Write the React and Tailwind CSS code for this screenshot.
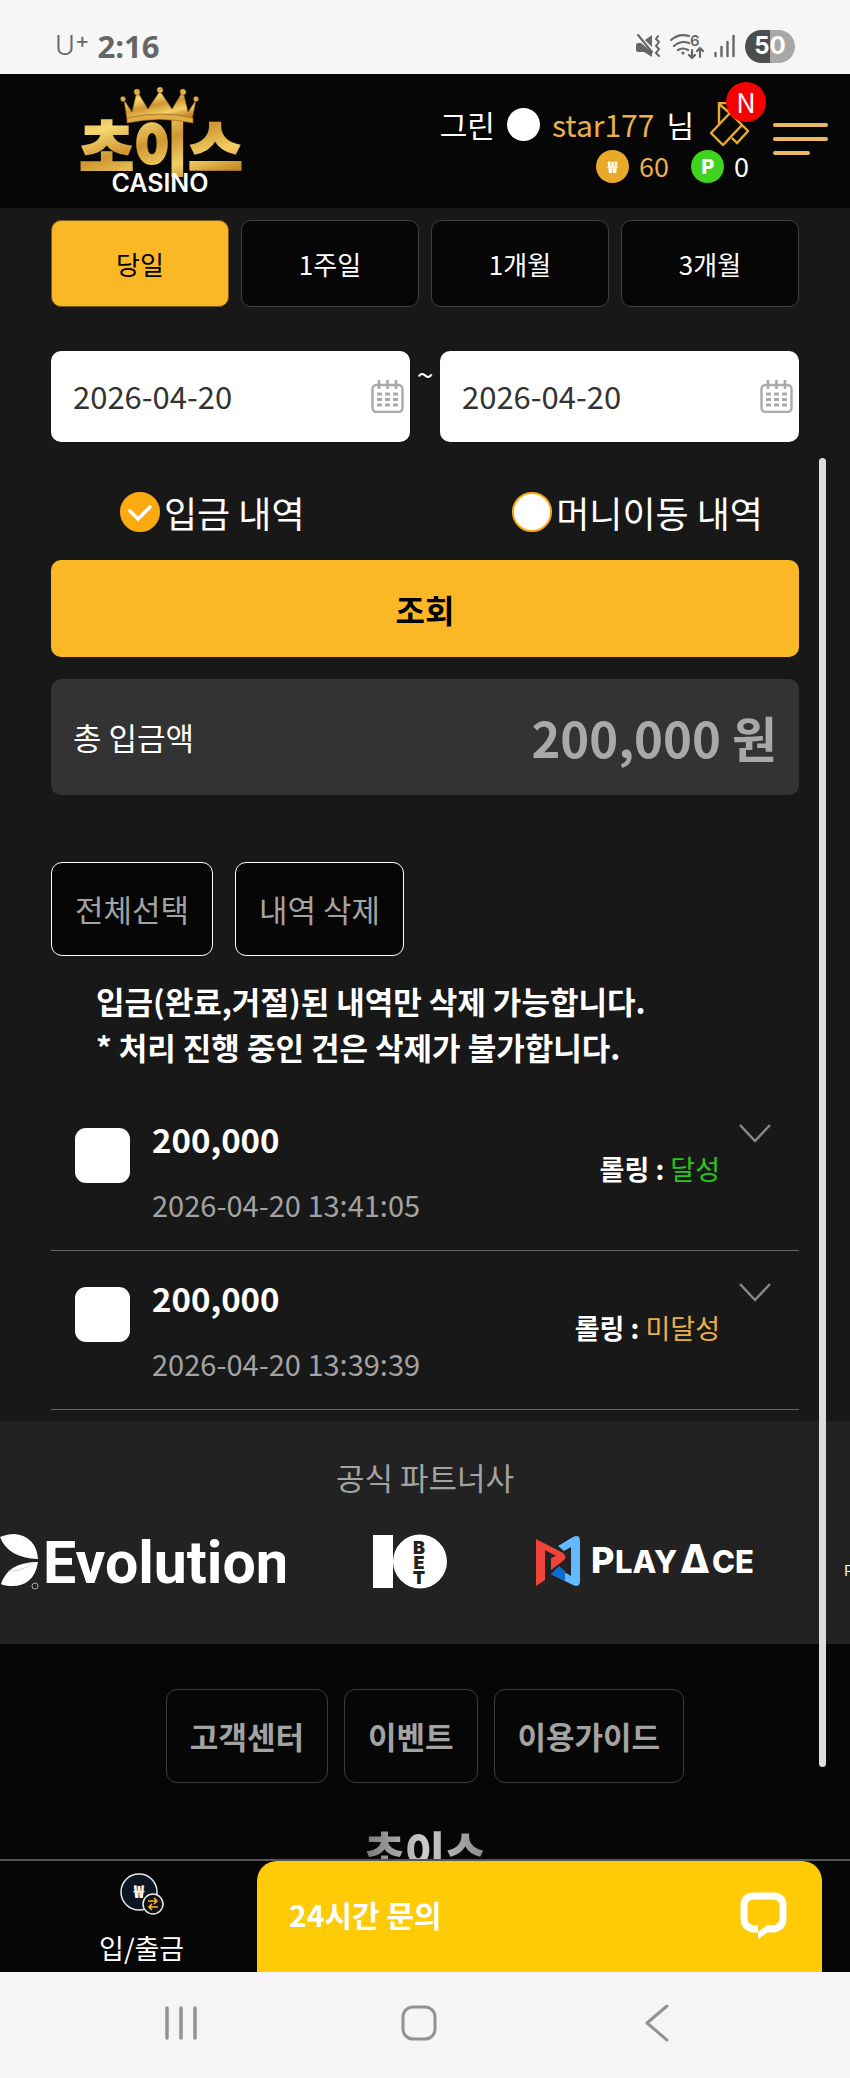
import { useState } from "react";

const periods = ["당일", "1주일", "1개월", "3개월"];

const historyTypes = [
  { id: "deposit", label: "입금 내역" },
  { id: "transfer", label: "머니이동 내역" },
];

const deposits = [
  { id: 1, amount: "200,000", date: "2026-04-20 13:41:05", rolling: "달성", done: true },
  { id: 2, amount: "200,000", date: "2026-04-20 13:39:39", rolling: "미달성", done: false },
];

const footerLinks = ["고객센터", "이벤트", "이용가이드"];

const StatusBar = () => (
  <div className="flex h-[74px] items-center justify-between bg-[#f6f6f6] px-[55px] pt-[18px] text-[#666]">
    <div className="flex items-center gap-2 font-['Open_Sans',sans-serif]">
      <span className="flex items-start font-[Inter,sans-serif] text-[27px] leading-8 font-light">
        U<span className="text-[22px] leading-5 font-normal">+</span>
      </span>
      <span className="text-[31px] leading-8 font-bold">2:16</span>
    </div>
    <div className="flex items-center gap-[10px]">
      {/* muted + vibrate */}
      <svg width="24" height="24" viewBox="0 0 24 24" fill="#666">
        <path d="M0 11q0-2 2-2h3l11 9v5l-8-5H2q-2 0-2-2zM9 6l7-5v12z" />
        <path d="M2 1l14 17" stroke="#666" strokeWidth="2" strokeLinecap="round" />
        <path
          d="M22 2l-2 3 3 3-3 4 3 3-3 4 3 3"
          fill="none"
          stroke="#666"
          strokeWidth="2"
          strokeLinecap="round"
        />
      </svg>
      {/* wifi 6 */}
      <svg width="34" height="26" viewBox="0 0 34 26" fill="none" stroke="#666" strokeWidth="2.2" strokeLinecap="round">
        <path d="M1 7Q9 0 19 3M4 13q7-6 15-3M8 17q5-3 10 0" />
        <circle cx="13" cy="20" r="1.600" fill="#666" stroke="none" />
        <path d="M22 17v8m-3-3 3 3 3-3M30 24v-9m-3 3 3-3 3 3" />
        <text x="20" y="13" fontSize="15" fontWeight="600" fontFamily="Inter" fill="#666" stroke="none">
          6
        </text>
      </svg>
      <svg width="21" height="24" viewBox="0 0 21 24" stroke="#666" strokeWidth="2.4" strokeLinecap="round">
        <path d="M1.500 19v3M7.500 13v9M13.500 8v14M19.500 2v20" />
      </svg>
      <span className="flex h-[33px] w-[50px] items-center justify-center rounded-full bg-linear-to-r from-[#4d4d4d] from-50% to-[#a8a8a8] to-50% font-[Inter,sans-serif] text-[24px] font-bold text-white">
        50
      </span>
    </div>
  </div>
);

const Logo = () => (
  <svg width="166" height="108" viewBox="0 0 166 108" role="img" aria-label="초이스 CASINO">
    <defs>
      <linearGradient id="gold" x1="0" y1="0" x2="0.6" y2="1">
        <stop offset="0" stopColor="#d79a35" />
        <stop offset="0.3" stopColor="#f6d873" />
        <stop offset="0.55" stopColor="#cf9630" />
        <stop offset="0.8" stopColor="#f3cf66" />
        <stop offset="1" stopColor="#c58a2a" />
      </linearGradient>
    </defs>
    <text
      x="81"
      y="85"
      textAnchor="middle"
      fontFamily="'Noto Sans CJK KR'"
      fontWeight="900"
      fontSize="59"
      fill="url(#gold)"
      stroke="url(#gold)"
      strokeWidth="2"
    >
      초이스
    </text>
    <g fill="url(#gold)" stroke="#8a5413" strokeWidth="0.6">
      <path d="M47 35L44 15l8 12 5-21 11 18L80 6l12 18 11-18 5 21 8-12-4 20q-32-8-65 0z" />
      <path d="M47 33q33-8 66 0v5q-33-7-66 0z" fill="#e3ad45" />
      <circle cx="43" cy="14" r="2.5" />
      <circle cx="57" cy="7" r="3" />
      <circle cx="80" cy="5" r="3" />
      <circle cx="103" cy="7" r="3" />
      <circle cx="116" cy="14" r="2.5" />
    </g>
    <text x="80" y="107" textAnchor="middle" fontFamily="Inter" fontWeight="600" fontSize="25" fill="#fff">
      CASINO
    </text>
  </svg>
);

const Header = () => (
  <header className="flex h-[134px] items-start justify-between bg-[#060606] pr-[22px] pl-20 text-white">
    <a href="#home" className="pt-[11px]">
      <Logo />
    </a>
    <div className="flex gap-6 pt-[29px]">
      <div className="flex flex-col items-end gap-1">
        <div className="flex h-[42px] items-center text-[30px]">
          <span>그린</span>
          <span className="mx-3 h-[33px] w-[33px] rounded-full bg-white" />
          <span className="text-[#eab04a]">star177</span>
          <span className="mr-4 ml-3">님</span>
          <a href="#messages" aria-label="쪽지" className="relative">
            <svg width="39" height="44" viewBox="0 0 39 44" fill="none" stroke="#e9ab27" strokeWidth="2.4">
              <path d="M1 31L20 11 32 23 13 43zM9 22V1h14M9 2l12 10M22 36l5 5 11-12-7-7" />
            </svg>
            <span className="absolute -top-5 left-4 flex h-10 w-10 items-center justify-center rounded-full bg-[#f80000] text-[27px] text-white">
              N
            </span>
          </a>
        </div>
        <div className="flex h-[34px] items-center text-[27px]">
          <span className="flex h-[33px] w-[33px] items-center justify-center rounded-full bg-[#e9a92b] text-base font-black">
            ₩
          </span>
          <span className="mr-[22px] ml-[10px] text-[#eab04a]">60</span>
          <span className="flex h-[33px] w-[33px] items-center justify-center rounded-full bg-[#3fd21e] text-xl font-black">
            P
          </span>
          <span className="ml-[10px]">0</span>
        </div>
      </div>
      <button aria-label="메뉴" className="mt-5 flex h-8 w-[55px] flex-col justify-between">
        <span className="h-1 w-full rounded-full bg-[#ecb862]" />
        <span className="h-1 w-full rounded-full bg-[#ecb862]" />
        <span className="h-1 w-[37px] rounded-full bg-[#ecb862]" />
      </button>
    </div>
  </header>
);

const DateField = ({ label, value, onChange }) => (
  <div className="flex h-[91px] min-w-0 flex-1 items-center rounded-[10px] bg-white pr-[6px] pl-[22px]">
    <input
      type="text"
      aria-label={label}
      value={value}
      onChange={(e) => onChange(e.target.value)}
      className="min-w-0 flex-1 text-[31px] text-[#333] outline-none"
    />
    <button aria-label="달력 열기">
      <svg width="33" height="33" viewBox="0 0 33 33" fill="none" stroke="#a9a9a9" strokeWidth="2.4">
        <rect x="1.500" y="5" width="30" height="27" rx="4" />
        <path d="M8 0v9M16.500 0v9M25 0v9" strokeWidth="2.600" />
        <path d="M6 14h21M6 19.500h21M6 25h21" strokeWidth="3" strokeDasharray="5 3" />
      </svg>
    </button>
  </div>
);

const DepositRow = ({ item, checked, onToggle }) => (
  <li className="flex h-[159px] items-start border-b border-[#666] pl-6">
    <input
      type="checkbox"
      aria-label={`${item.amount} ${item.date}`}
      checked={checked}
      onChange={onToggle}
      className="mt-9 h-[55px] w-[55px] appearance-none rounded-[11px] bg-white checked:bg-[#fab827]"
    />
    <div className="ml-[22px] flex flex-1 flex-col gap-[17px] pt-[23px]">
      <strong className="text-[33px] leading-[48px] font-bold">{item.amount}</strong>
      <time className="text-[29px] leading-[48px] text-[#a3a3a3]">{item.date}</time>
    </div>
    <p className="mt-[57px] text-[27px] leading-10 font-bold">
      롤링 :{" "}
      <span className={item.done ? "font-normal text-[#2bc41a]" : "font-normal text-[#eab04a]"}>
        {item.rolling}
      </span>
    </p>
    <button aria-label="상세 보기" className="mt-8 mr-7 ml-[19px]">
      <svg width="32" height="20" viewBox="0 0 32 20" fill="none" stroke="#888" strokeWidth="2.5">
        <path d="M1 1l15 16L31 1" />
      </svg>
    </button>
  </li>
);

const Partners = () => (
  <section className="bg-[#222] pt-[33px] pb-[54px]">
    <h2 className="text-center text-[31px] leading-[46px] text-[#a3a3a3]">공식 파트너사</h2>
    <div className="mt-[34px] flex gap-[88px] overflow-hidden">
      {/* Evolution */}
      <svg width="285" height="56" viewBox="0 0 285 56" className="shrink-0" fill="#fff">
        <path d="M0 3Q8 0 14 0Q36 2 38 25Q8 24 0 3z" />
        <path d="M38 28Q34 52 12 52 5 52 1 50 8 28 38 28z" />
        <path d="M8 37q14 1 25-8" fill="none" stroke="#bbb" strokeWidth="0.600" />
        <circle cx="35" cy="52" r="3" fill="none" stroke="#aaa" />
        <text x="43" y="49" fontFamily="Roboto" fontWeight="700" fontSize="59">
          Evolution
        </text>
      </svg>
      {/* 10BET */}
      <svg width="74" height="56" viewBox="0 0 74 56" className="shrink-0" fill="#fff">
        <path d="M0 1h20v53H0z" />
        <circle cx="47" cy="27.500" r="27" />
        <g fontFamily="Inter" fontWeight="900" fontSize="18" fill="#222" textAnchor="middle">
          <text x="46" y="20">B</text>
          <text x="46" y="35">E</text>
          <text x="46" y="50">T</text>
        </g>
      </svg>
      {/* PlayAce */}
      <svg width="221" height="56" viewBox="0 0 221 56" className="shrink-0">
        <path d="M23 12L38 3q7-3 7 4v40q0 7-7 4L16 40l8-5 12 7V13l-7 4z" fill="#63b8ff" />
        <path d="M16 40l8-8 6 5v10z" fill="#0c6fd0" />
        <path d="M1 5l27 14q5 4 0 8L16 36V24l5-2-11-6v30L1 52z" fill="#f0443b" />
        <g fontFamily="Inter" fontWeight="800" fill="#fff">
          <text x="56" y="39" fontSize="36">P</text>
          <text x="80" y="39" fontSize="31">LAY</text>
          <text x="145" y="39" fontSize="39">Δ</text>
          <text x="177" y="39" fontSize="31">CE</text>
        </g>
      </svg>
      <span className="shrink-0 pt-[26px] text-[14px] leading-5 text-white">P</span>
    </div>
  </section>
);

const Footer = () => (
  <footer className="flex h-[215px] flex-col items-center gap-[41px] overflow-hidden bg-[#060606] pt-[45px]">
    <nav className="flex shrink-0 gap-4">
      {footerLinks.map((link) => (
        <a
          key={link}
          href="#footer"
          className="flex h-[94px] items-center rounded-[11px] border border-[#3a3a3a] px-[23px] text-[31px] font-bold text-[#a3a3a3]"
        >
          {link}
        </a>
      ))}
    </nav>
    <span className="shrink-0 bg-linear-to-r from-[#777] via-[#ccc] to-[#888] bg-clip-text text-[44px] leading-[52px] font-black text-transparent">
      초이스
    </span>
  </footer>
);

const BottomBar = () => (
  <div className="relative h-[113px] border-t-2 border-[#555] bg-[#060606]">
    <a href="#wallet" className="flex w-1/3 flex-col items-center pt-2 text-white">
      <svg width="46" height="48" viewBox="0 0 46 48">
        <circle cx="20" cy="23" r="18" fill="#0c1622" stroke="#e8e8e8" strokeWidth="1.500" />
        <text
          x="20"
          y="29"
          textAnchor="middle"
          fontFamily="'Noto Sans CJK KR'"
          fontWeight="900"
          fontSize="17"
          fill="#fff"
        >
          ₩
        </text>
        <circle cx="34" cy="35" r="10" fill="#111" stroke="#e8e8e8" strokeWidth="1.500" />
        <path
          d="M29 32h9m-3-3 3 3-3 3M39 38h-9m3-3-3 3 3 3"
          fill="none"
          stroke="#f5b52b"
          strokeWidth="1.600"
        />
      </svg>
      <span className="mt-2 text-[27px] leading-[46px]">입/출금</span>
    </a>
    <button className="absolute top-0 right-7 bottom-0 left-[257px] flex items-center justify-between rounded-t-[20px] bg-[#fecb06] pr-[35px] pb-1 pl-8 text-[30px] font-bold text-white">
      24시간 문의
      <svg width="47" height="48" viewBox="0 0 47 48" fill="none" stroke="#fff" strokeWidth="7">
        <path d="M18 38h-4q-10-1-10-11V15Q4 5 14 5h19q10 0 10 10v12q0 10-10 11h-5" />
        <path d="M18 34v14l13-9v-5h-4l-9 7z" fill="#fff" stroke="none" />
      </svg>
    </button>
  </div>
);

const SystemNav = () => (
  <nav className="grid h-[106px] grid-cols-3 items-center justify-items-center bg-[#f5f5f7] pr-[74px] pb-1 pl-[62px]">
    <button aria-label="최근 앱">
      <svg width="34" height="36" viewBox="0 0 34 36" stroke="#929292" strokeWidth="3.5" strokeLinecap="round">
        <path d="M3 3v30M17 3v30M31 3v30" />
      </svg>
    </button>
    <button aria-label="홈">
      <svg width="36" height="36" viewBox="0 0 36 36" fill="none" stroke="#929292" strokeWidth="3">
        <rect x="2" y="2" width="32" height="32" rx="10" />
      </svg>
    </button>
    <button aria-label="뒤로">
      <svg
        width="24"
        height="38"
        viewBox="0 0 24 38"
        fill="none"
        stroke="#929292"
        strokeWidth="3"
        strokeLinecap="round"
        strokeLinejoin="round"
      >
        <path d="M22 2L2 19l20 17" />
      </svg>
    </button>
  </nav>
);

export default function App() {
  const [period, setPeriod] = useState("당일");
  const [from, setFrom] = useState("2026-04-20");
  const [to, setTo] = useState("2026-04-20");
  const [type, setType] = useState("deposit");
  const [selected, setSelected] = useState([]);

  const toggle = (id) => {
    setSelected((prev) => (prev.includes(id) ? prev.filter((x) => x !== id) : [...prev, id]));
  };

  return (
    <div className="relative overflow-hidden bg-[#181818] font-['Noto_Sans_CJK_KR','Noto_Sans',sans-serif] text-white">
      <StatusBar />
      <Header />

      <main className="px-[51px] pt-3 pb-[11px]">
        {/* Period */}
        <div className="grid grid-cols-4 gap-3">
          {periods.map((p) => (
            <button
              key={p}
              onClick={() => setPeriod(p)}
              className={
                p === period
                  ? "h-[87px] rounded-[10px] border border-[#7a5a1c] bg-[#fab827] text-[26px] text-black"
                  : "h-[87px] rounded-[10px] border border-[#3f3f3f] bg-[#060606] text-[26px] text-white"
              }
            >
              {p}
            </button>
          ))}
        </div>

        {/* Date range */}
        <div className="mt-11 flex">
          <DateField label="시작일" value={from} onChange={setFrom} />
          <span className="w-[30px] text-center text-[30px] leading-[44px]">~</span>
          <DateField label="종료일" value={to} onChange={setTo} />
        </div>

        <div className="mt-[46px] flex h-12 items-center justify-between pr-[36px] pl-[69px]">
          {historyTypes.map((t) => (
            <label key={t.id} className="flex items-center gap-1 text-[36px]">
              <span className="relative flex">
                <input
                  type="radio"
                  name="type"
                  checked={type === t.id}
                  onChange={() => setType(t.id)}
                  className="h-10 w-10 appearance-none rounded-full border-2 border-[#fbaa10] bg-white checked:bg-[#fbaa10]"
                />
                {type === t.id && (
                  <svg
                    viewBox="0 0 40 40"
                    className="pointer-events-none absolute inset-0"
                    fill="none"
                    stroke="#fff"
                    strokeWidth="3.5"
                    strokeLinecap="round"
                  >
                    <path d="M10 19l8 8 12-12" />
                  </svg>
                )}
              </span>
              {t.label}
            </label>
          ))}
        </div>

        <button className="mt-6 h-[97px] w-full rounded-[10px] bg-[#fab827] text-[32px] font-bold text-black">
          조회
        </button>

        <div className="mt-[22px] flex h-[116px] items-center justify-between rounded-[10px] bg-[#333] px-[22px]">
          <span className="text-[31px]">총 입금액</span>
          <strong className="text-[49px] font-bold text-[#a9a9a9]">200,000 원</strong>
        </div>

        {/* Bulk actions */}
        <div className="mt-[67px] flex gap-[22px]">
          <button
            onClick={() => setSelected(deposits.map((d) => d.id))}
            className="h-[94px] rounded-[11px] border border-white bg-[#060606] px-[23px] text-[31px] text-[#a3a3a3]"
          >
            전체선택
          </button>
          <button className="h-[94px] rounded-[11px] border border-white bg-[#060606] px-[23px] text-[31px] text-[#a3a3a3]">
            내역 삭제
          </button>
        </div>

        <p className="mt-[22px] pl-[45px] text-[31px] leading-[46px] font-bold">
          입금(완료,거절)된 내역만 삭제 가능합니다.
          <br />* 처리 진행 중인 건은 삭제가 불가합니다.
        </p>

        <ul className="mt-[22px]">
          {deposits.map((d) => (
            <DepositRow
              key={d.id}
              item={d}
              checked={selected.includes(d.id)}
              onToggle={() => toggle(d.id)}
            />
          ))}
        </ul>
      </main>

      <Partners />
      <Footer />
      <BottomBar />
      <SystemNav />

      {/* scroll indicator */}
      <div className="absolute top-[458px] right-6 bottom-[311px] w-[7px] rounded-full bg-[#dddde0]" />
    </div>
  );
}
